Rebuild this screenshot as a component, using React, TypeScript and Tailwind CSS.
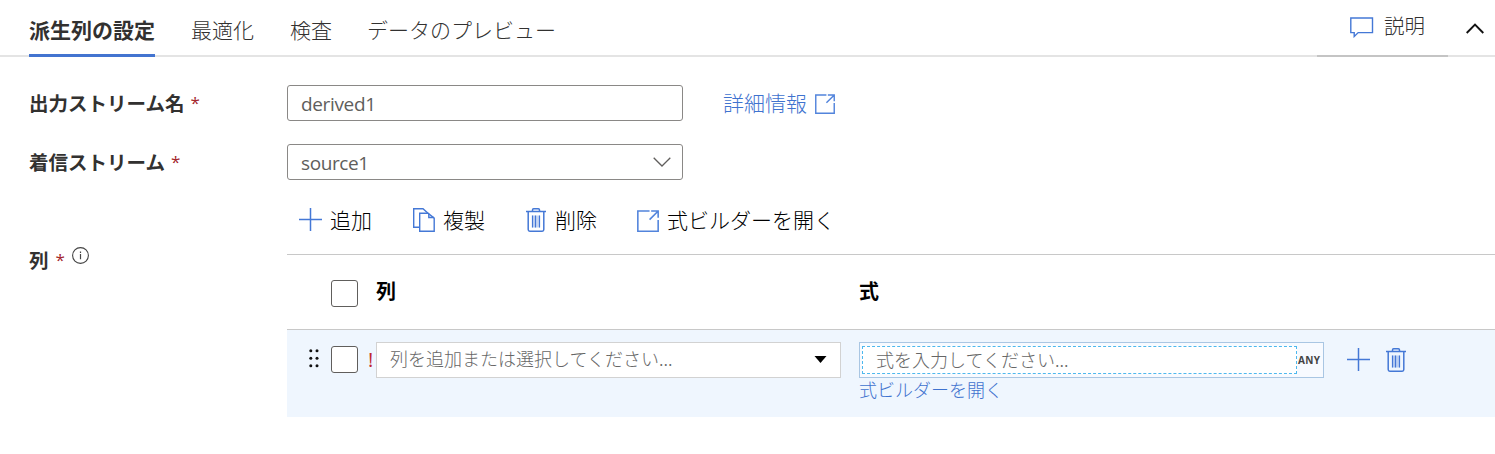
import type { ReactNode } from 'react';

type IconProps = { className?: string };

function PlusIcon({ className = '' }: IconProps) {
  return (
    <svg className={`shrink-0 ${className}`} width="23" height="23" viewBox="0 0 23 23" fill="none" stroke="#4478d6" strokeWidth="1.5">
      <path d="M0 11.5H23M11.5 0V23" />
    </svg>
  );
}

function CopyIcon({ className = '' }: IconProps) {
  return (
    <svg className={`shrink-0 ${className}`} width="22" height="24" viewBox="0 0 22 24" fill="none" stroke="#4478d6" strokeWidth="1.4">
      <path d="M6.5 19.2H.7V.7H10L15 5.2" />
      <path d="M6.7 5.2H15L21.2 10.2V23.3H6.7Z" />
      <path d="M15.8 5.5V9.5H21" />
    </svg>
  );
}

function TrashIcon({ className = '' }: IconProps) {
  return (
    <svg className={`shrink-0 ${className}`} width="20" height="24" viewBox="0 0 20 24" fill="none" stroke="#4478d6" strokeWidth="1.5">
      <path d="M0 3.6H20M6.5 3.5V1.9Q6.5.8 7.6.8H12.4Q13.5.8 13.5 1.9V3.5" />
      <path d="M2.2 4V21.6Q2.2 23.2 3.8 23.2H16.2Q17.8 23.2 17.8 21.6V4" />
      <path d="M6.5 7.5V19.5M9.5 7.5V19.5M13.5 7.5V19.5" strokeWidth="1.2" />
      <path d="M6 7.5H14V19.5H6Z" fill="#4478d6" fillOpacity=".3" stroke="none" />
    </svg>
  );
}

function OpenIcon({ size, className = '' }: IconProps & { size: number }) {
  return (
    <svg className={`shrink-0 ${className}`} width={size} height={size} viewBox="0 0 21 21" fill="none" stroke="#5284dc" strokeWidth="1.5">
      <path d="M12 1H.8V20.2H20.2V9.5" />
      <path d="M13.5 1H20.2V7.5M20 1.2L12 9.2" />
    </svg>
  );
}

function Label({ children }: { children: ReactNode }) {
  return (
    <div className="flex w-[258px] shrink-0 items-center text-[19.5px] font-bold text-[#323130]">
      <span>{children}</span>
      <span className="ml-[6px] font-['Open_Sans'] text-[17px] font-normal text-[#a4262c]">*</span>
    </div>
  );
}

function CheckBox({ className = '' }: IconProps) {
  return <span className={`size-[27px] shrink-0 rounded-[3px] border border-[#605e5c] bg-white ${className}`} />;
}

export default function App() {
  return (
    <div className="h-[454px] w-[1495px] overflow-hidden bg-white font-['Noto_Sans_CJK_JP',sans-serif] font-light whitespace-nowrap text-[#323130]">
      <header className="flex h-[57px] justify-between">
        <nav className="flex grow gap-[36px] border-b-2 border-[#e4e4e4] pl-[29px] text-[21px] leading-[58px]">
          <span className="h-[57px] border-b-3 border-[#4374d0] font-bold">派生列の設定</span>
          <span>最適化</span>
          <span>検査</span>
          <span className="-ml-px">データのプレビュー</span>
        </nav>
        <div className="flex w-[131px] items-start border-b-2 border-[#c4c4c4] pl-[33px] text-[20.5px] leading-[50px]">
          <svg className="mt-[17px] shrink-0" width="24" height="21" viewBox="0 0 24 21" fill="none" stroke="#4478d6" strokeWidth="1.4">
            <path d="M.8 1H22.5V15.6H8.2L4.2 19.5V15.6H.8Z" />
          </svg>
          <span className="ml-[10px]">説明</span>
        </div>
        <div className="w-[47px] border-b-2 border-[#e4e4e4] pt-[23px] pl-[18px]">
          <svg width="18" height="11" viewBox="0 0 18 11" fill="none" stroke="#111" strokeWidth="1.9">
            <path d="M.7 10L9 1.5L17.3 10" />
          </svg>
        </div>
      </header>

      <section className="mt-[28px] pl-[29px]">
        <div className="flex h-[36px] items-center">
          <Label>出力ストリーム名</Label>
          <div className="flex h-[36px] w-[396px] items-center rounded-[3px] border border-[#8a8886] pt-[2px] pl-[13px] font-['Open_Sans'] text-[19px] font-normal tracking-[-0.35px] text-[#605e5c]">
            derived1
          </div>
          <a className="ml-[40px] flex items-center text-[21px] text-[#3f73cf]">
            詳細情報
            <OpenIcon size={20} className="mt-[2px] ml-[8px]" />
          </a>
        </div>
        <div className="mt-[23px] flex h-[36px] items-center">
          <Label>着信ストリーム</Label>
          <div className="flex h-[36px] w-[396px] items-center justify-between rounded-[3px] border border-[#8a8886] pr-[11px] pl-[13px] font-['Open_Sans'] text-[19px] font-normal tracking-[-0.4px] text-[#605e5c]">
            <span className="pt-[2px]">source1</span>
            <svg width="18" height="10" viewBox="0 0 18 10" fill="none" stroke="#605e5c" strokeWidth="1.3">
              <path d="M.7 .8L9 9L17.3 .8" />
            </svg>
          </div>
        </div>
      </section>

      <section className="flex pl-[29px]">
        <div className="flex w-[258px] shrink-0 items-start pt-[65px] text-[19.5px] leading-[30px] font-bold">
          <span>列</span>
          <span className="ml-[7px] font-['Open_Sans'] text-[17px] font-normal text-[#a4262c]">*</span>
          <svg className="mt-[2px] ml-[7px]" width="17" height="17" viewBox="0 0 17 17" fill="none" stroke="#444" strokeWidth="1.1">
            <circle cx="8.5" cy="8.5" r="7.9" />
            <path d="M8.5 7V12.3M8.5 4.6V5.9" strokeWidth="1.2" />
          </svg>
        </div>

        <div className="grow">
          <div className="flex h-[74px] items-center pt-[6px] pl-[12px] text-[21px] text-black">
            <PlusIcon className="-mt-[2px]" />
            <span className="ml-[8px] w-[83px]">追加</span>
            <CopyIcon className="-mt-[1px]" />
            <span className="ml-[8px] w-[83px]">複製</span>
            <TrashIcon className="-mt-[1px]" />
            <span className="ml-[9px] w-[82px]">削除</span>
            <OpenIcon size={22} className="mt-[2px]" />
            <span className="ml-[8px]">式ビルダーを開く</span>
          </div>

          <div className="flex h-[75px] items-center border-t border-[#c8c8c8] pl-[44px] text-[20px] font-bold text-black">
            <CheckBox className="mt-[3px]" />
            <span className="-mt-[2px] ml-[18px] w-[483px]">列</span>
            <span className="-mt-[2px]">式</span>
          </div>

          <div className="flex h-[88px] items-start border-t border-[#c8c8c8] bg-[#eff6fe]">
            <svg className="mt-[19px] ml-[22px] shrink-0" width="10" height="20" viewBox="0 0 10 20" fill="#111">
              <circle cx="1.8" cy="1.8" r="1.5" />
              <circle cx="8" cy="1.8" r="1.5" />
              <circle cx="1.8" cy="9.3" r="1.5" />
              <circle cx="8" cy="9.3" r="1.5" />
              <circle cx="1.8" cy="16.8" r="1.5" />
              <circle cx="8" cy="16.8" r="1.5" />
            </svg>
            <CheckBox className="mt-[16px] ml-[12px]" />
            <span className="mt-[12px] ml-[10px] w-[8px] font-['Open_Sans'] text-[20px] leading-[36px] font-normal text-[#c0272d]">!</span>
            <div className="mt-[12px] flex h-[36px] w-[465px] items-center justify-between border border-[#d2d2d2] bg-white pr-[13px] pl-[13px] text-[18px] text-[#666]">
              <span className="-mt-[3px]">列を追加または選択してください...</span>
              <svg className="-mt-[2px]" width="13" height="7" viewBox="0 0 13 7" fill="#000">
                <path d="M.5 0H12.5L6.5 7Z" />
              </svg>
            </div>
            <div className="mt-[12px] ml-[18px] w-[465px]">
              <div className="flex h-[36px] items-center border border-[#a9c6e3] bg-[#f7faff] pl-[2px]">
                <div className="flex h-[28px] w-[435px] items-center border border-dashed border-[#4db8ee] bg-white pb-[2px] pl-[13px] text-[18px] text-[#666]">
                  式を入力してください...
                </div>
                <span className="ml-[1px] pt-px font-['Open_Sans'] text-[10px] font-bold tracking-[0.3px] text-[#444]">ANY</span>
              </div>
              <a className="-mt-[2px] block text-[18px] leading-[26px] text-[#3f73cf]">式ビルダーを開く</a>
            </div>
            <PlusIcon className="mt-[18px] ml-[23px]" />
            <TrashIcon className="mt-[18px] ml-[16px]" />
          </div>
        </div>
      </section>
    </div>
  );
}
